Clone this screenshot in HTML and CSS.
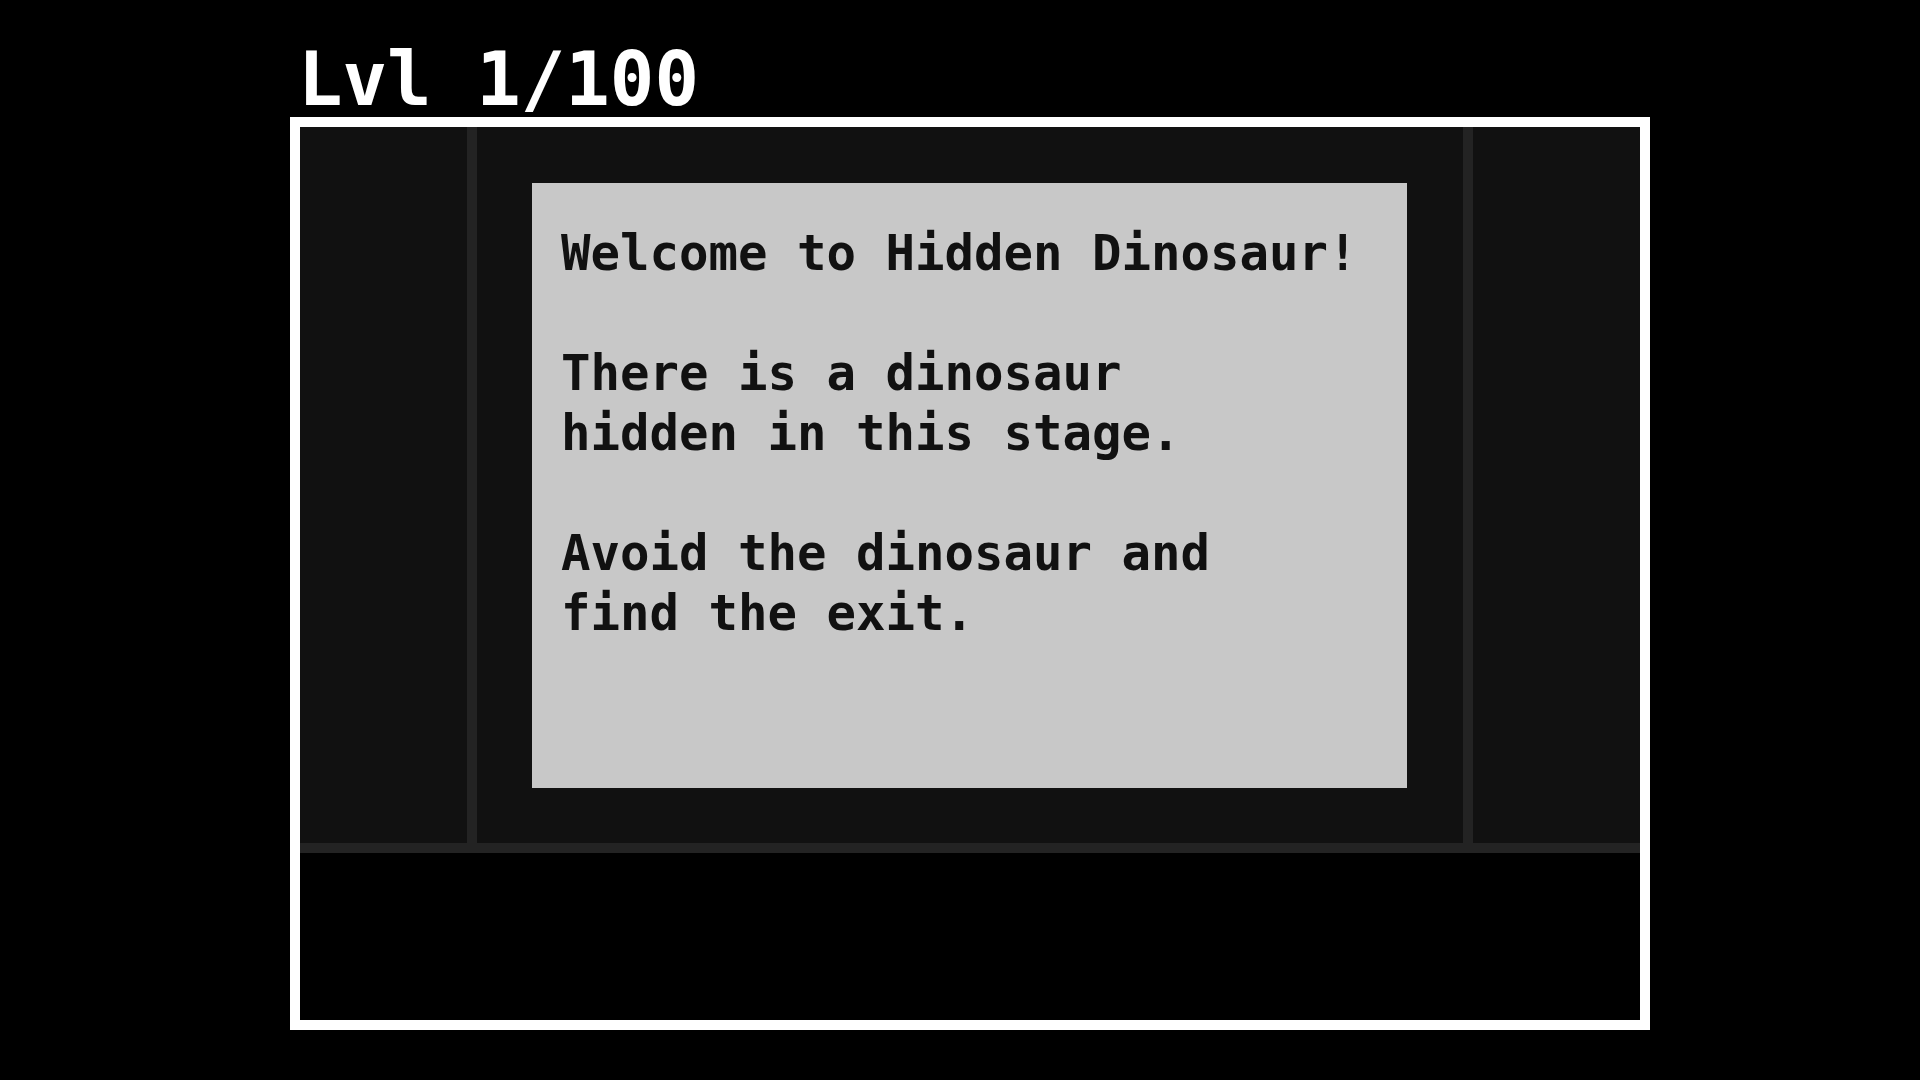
FILE: index.html
```html
<!DOCTYPE html>
<html>
<head>
<meta charset="utf-8">
<title>Hidden Dinosaur</title>
<link rel="stylesheet" href="styles.css">
</head>
<body>
<div class="stage">
  <div class="title">Lvl 1/100</div>
  <div class="box">
    <div class="room">
      <div class="cell"></div>
      <div class="cell center">
        <div class="panel"><pre class="msg">Welcome to Hidden Dinosaur!

There is a dinosaur
hidden in this stage.

Avoid the dinosaur and
find the exit.</pre></div>
      </div>
      <div class="cell"></div>
    </div>
    <div class="floor"></div>
  </div>
</div>
</body>
</html>
```

FILE: styles.css
```css
html, body {
  margin: 0;
  padding: 0;
  background: #000;
  width: 1920px;
  height: 1080px;
  overflow: hidden;
}

.stage {
  margin-left: 290px;
  width: 1360px;
}

.title {
  box-sizing: border-box;
  height: 117px;
  padding-top: 42px;
  padding-left: 8px;
  font-family: "DejaVu Sans Mono", "Liberation Mono", monospace;
  font-weight: bold;
  font-size: 74px;
  line-height: 74px;
  color: #fff;
  white-space: pre;
}

.box {
  width: 1340px;
  height: 893px;
  border: 10px solid #fff;
  background: #232323;
  display: grid;
  grid-template-rows: 716px 167px;
  row-gap: 10px;
}

.room {
  display: grid;
  grid-template-columns: 167px 986px 167px;
  column-gap: 10px;
}

.cell {
  background: #111;
}

.center {
  box-sizing: border-box;
  padding: 56px 56px 55px 55px;
}

.panel {
  height: 100%;
  background: #c8c8c8;
  box-sizing: border-box;
  padding: 41px 0 0 29px;
}

.msg {
  margin: 0;
  font-family: "DejaVu Sans Mono", "Liberation Mono", monospace;
  font-weight: bold;
  font-size: 49px;
  line-height: 60px;
  color: #111;
}

.floor {
  background: #000;
}
```
